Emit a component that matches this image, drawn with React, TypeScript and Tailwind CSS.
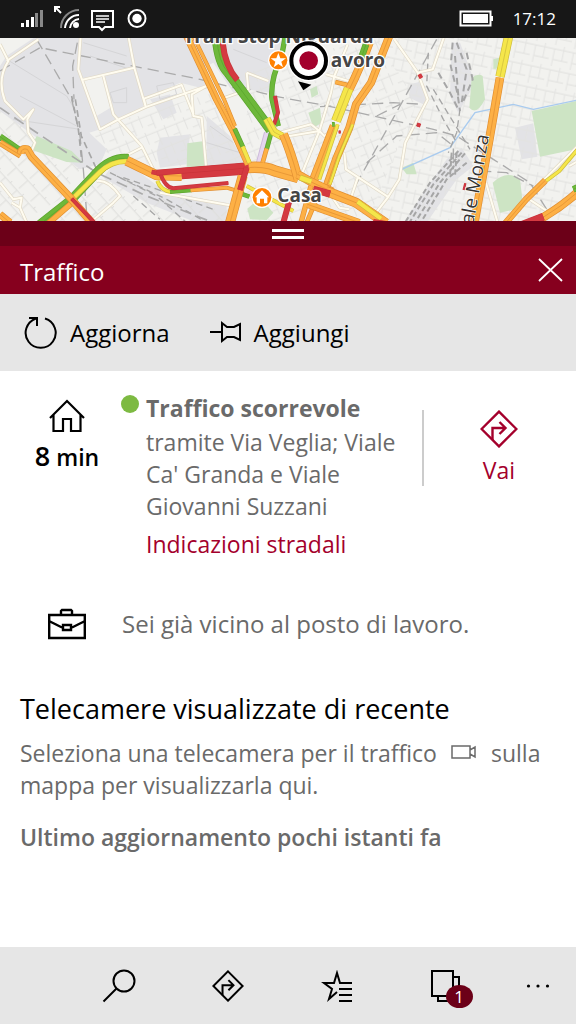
import type { ReactNode } from "react";

const traffic = {
  orange: { fill: "#fdb045", edge: "#e08e32" },
  green: { fill: "#6db83a", edge: "#5aa32c" },
  yellow: { fill: "#f5e64a", edge: "#cdbb3c" },
  red: { fill: "#d43a41", edge: "#c8333a" },
};

type Level = keyof typeof traffic;

// streets are drawn on a 1728 x 549 canvas, three units for one pixel
const leftRoads: [Level, number, string][] = [
  ["orange", 22, "M0 535L30 560"],
  ["green", 28, "M120 565L215 490L290 410Q335 362 385 368"],
  ["orange", 18, "M145 562L220 497"],
  ["yellow", 16, "M218 488L300 408Q335 375 380 376"],
  ["green", 20, "M0 302L62 345"],
  ["orange", 20, "M0 320L62 358"],
  ["orange", 24, "M62 352Q65 335 82 340L95 362L215 490L275 560"],
  ["red", 12, "M215 488L285 562"],
  ["orange", 30, "M380 374L470 418L545 420"],
  ["yellow", 12, "M472 435Q482 464 515 468"],
  ["green", 12, "M510 468L575 463"],
  ["orange", 12, "M572 463L680 455L730 470"],
  ["red", 12, "M480 410Q495 455 520 457L685 441"],
  ["orange", 34, "M740 395Q790 390 825 405L895 425"],
  ["red", 14, "M455 408L480 412"],
  ["red", 34, "M545 413L735 399"],
  ["red", 18, "M470 410L745 388"],
  ["orange", 22, "M560 0L650 190L700 285L745 385"],
  ["orange", 12, "M580 0L672 190L705 270"],
  ["green", 14, "M704 278L730 335"],
  ["yellow", 14, "M728 332L748 380"],
  ["green", 30, "M650 0Q655 80 685 110L770 225L812 282"],
  ["red", 18, "M668 20Q675 90 712 132"],
  ["green", 16, "M856 0L845 60Q810 130 816 190L835 270"],
  ["red", 12, "M825 180L834 230L822 265"],
  ["green", 14, "M815 285L800 340"],
  ["orange", 14, "M800 338L788 380"],
  ["yellow", 24, "M800 248L822 288L848 302"],
  ["orange", 28, "M850 295Q870 340 895 430"],
  ["yellow", 12, "M740 450L880 525"],
  ["green", 14, "M720 472L748 482"],
  ["orange", 30, "M728 420L690 560"],
  ["red", 18, "M740 395L720 462"],
  ["red", 18, "M868 495L850 560"],
];

const rightRoads: [Level, number, string][] = [
  ["orange", 14, "M148 138L188 148"],
  ["orange", 26, "M250 20Q220 100 190 160"],
  ["green", 20, "M240 25L225 68"],
  ["yellow", 30, "M188 158L150 255"],
  ["orange", 28, "M145 270L80 440"],
  ["yellow", 12, "M155 265L100 430"],
  ["orange", 24, "M310 0L255 140L210 205L190 275L150 370L122 450"],
  ["yellow", 10, "M200 265L160 360L132 445"],
  ["green", 14, "M138 265L146 265"],
  ["red", 10, "M158 288L164 288"],
  ["orange", 26, "M35 415L80 440L140 468"],
  ["yellow", 18, "M42 425L76 437"],
  ["orange", 30, "M120 465L210 500L300 562"],
  ["yellow", 16, "M215 497L285 548"],
  ["red", 22, "M82 460L132 474"],
  ["red", 14, "M262 556L300 562"],
  ["orange", 16, "M75 450L45 560"],
  ["orange", 14, "M100 470L62 560"],
  ["orange", 22, "M65 505L220 560"],
  ["orange", 26, "M642 125L610 310L565 560"],
  ["yellow", 28, "M668 0L642 122"],
  ["yellow", 12, "M875 340L820 405L780 435"],
  ["orange", 20, "M778 433L720 490L658 562"],
  ["orange", 26, "M885 460Q830 510 770 545L710 575"],
  ["red", 24, "M700 570L772 542"],
  ["green", 20, "M862 460L885 450"],
  ["red", 12, "M400 115L406 126"],
  ["red", 12, "M400 262L396 272"],
  ["red", 7, "M538 442L533 462"],
];

function Roads({ items }: { items: [Level, number, string][] }) {
  return (
    <g fill="none" strokeLinejoin="round">
      {items.map(([level, width, d]) => (
        <g key={d}>
          <path d={d} stroke={traffic[level].edge} strokeWidth={width} />
          <path d={d} stroke={traffic[level].fill} strokeWidth={width - 4} />
          {width > 19 && level !== "red" && (
            <path d={d} stroke={traffic[level].edge} strokeWidth="3" opacity="0.7" />
          )}
        </g>
      ))}
    </g>
  );
}

function CreamRoads({ d }: { d: string }) {
  return (
    <g fill="none" strokeLinejoin="round">
      <path d={d} stroke="#e0d9c8" strokeWidth="10" />
      <path d={d} stroke="#fffcf0" strokeWidth="6" />
    </g>
  );
}

function TrafficMap() {
  return (
    <svg
      role="img"
      aria-label="Mappa del traffico"
      viewBox="0 6 1728 549"
      preserveAspectRatio="xMidYMid slice"
      className="block h-[183px] w-full font-['Open_Sans',sans-serif]"
    >
      <defs>
        <pattern id="streetsA" width="62" height="54" patternUnits="userSpaceOnUse" patternTransform="rotate(-22)">
          <path d="M0 10H62M20 10V54M0 38H20M46 0V38" fill="none" stroke="#e2e2e0" strokeWidth="3" />
        </pattern>
        <pattern id="streetsB" width="58" height="64" patternUnits="userSpaceOnUse" patternTransform="rotate(12)">
          <path d="M0 12H58M12 12V64M40 0V44M12 44H58" fill="none" stroke="#e3e3e1" strokeWidth="3" />
        </pattern>
        <pattern id="streetsC" width="52" height="44" patternUnits="userSpaceOnUse" patternTransform="rotate(48)">
          <path d="M0 8H52M14 8V44M36 0V8" fill="none" stroke="#dededc" strokeWidth="3" />
        </pattern>
      </defs>

      <rect width="1728" height="560" fill="#f2f2ef" />
      <g fill="#e3e3e6">
        <path d="M20 60L110 0H590L620 160L540 140L430 190L430 215L350 250L310 120L250 130L290 240L340 210L350 250L300 280L268 290L320 340L300 385L240 400L90 290L0 225V90Z" />
        <path d="M540 0H850L810 170L740 160L700 170L640 80L600 100Z" />
        <path d="M620 240L690 300L735 385L620 390Z" />
        <path d="M480 305L570 295L560 385L480 395L470 350Z" />
        <path d="M450 190L510 175L530 230L490 250Z" />
        <path d="M340 385L380 380L500 470L680 500V560H590L440 500L310 425Z" />
        <path d="M1230 145L1258 138L1285 190L1270 205L1228 185Z" />
        <path d="M1545 275L1600 262L1612 362L1565 370Z" />
        <path d="M1210 560L1340 370L1385 335L1420 390L1370 430L1280 560Z" />
        <path d="M1355 20L1380 20L1425 140L1375 230L1350 180Z" />
      </g>
      <path d="M0 225L90 290L240 400L180 490L60 560H0Z" fill="url(#streetsC)" />
      <path d="M270 280L640 170L740 390H470L320 350Z" fill="url(#streetsA)" />
      <path d="M180 490L340 420L700 510V560H120Z" fill="url(#streetsC)" />
      <path d="M740 110L1130 0L1250 200L1100 560H740Z" fill="url(#streetsA)" />
      <path d="M1120 0H1728V560H1100L1250 200Z" fill="url(#streetsB)" />
      <g fill="none" stroke="#d5d5d7" strokeWidth="3">
        <path d="M20 70L200 180L230 230M60 180L230 270M40 250L240 280M250 20L380 60M270 60L390 100M330 170L380 155L380 200L340 200ZM470 150L520 140L530 175L480 190ZM630 270L700 320M620 320L720 350M700 40L800 80" />
      </g>
      <g fill="#cde4c4">
        <path d="M110 300L215 345L250 380L200 378L90 340Z" />
        <path d="M562 322L608 316L615 395L560 392Z" />
        <path d="M742 518L780 485L820 530L800 552L750 550Z" />
        <path d="M925 230L960 215L965 260L940 275Z" />
        <path d="M1415 125Q1435 110 1448 120L1455 190Q1430 240 1408 215Z" />
        <path d="M1595 225L1728 195V340L1620 362Z" />
        <path d="M1478 440Q1520 400 1560 430L1570 515L1500 530Z" />
        <path d="M1205 395L1240 380L1250 415L1220 415Z" />
        <path d="M1480 70L1498 65L1490 98L1480 98ZM930 160L950 150L955 175L935 185Z" />
      </g>
      <path d="M1205 400L1350 335L1425 230L1540 205L1600 220L1728 193" fill="none" stroke="#a9cbef" strokeWidth="4" />

      <g fill="none" stroke="#ababab" strokeWidth="4" strokeDasharray="34 18">
        <path d="M0 105L120 35L600 130L720 160" />
        <path d="M110 10L215 190L240 300L250 400L262 560M232 20L218 90L222 190" />
        <path d="M0 215L80 270L290 410L440 480L640 560" strokeWidth="5" />
        <path d="M720 150Q800 180 960 205L1120 240L1300 280L1370 300L1480 370L1590 440L1640 520" />
        <path d="M1310 10L1200 210L1060 460M960 212L1180 200L1270 205M1130 240L1200 205M1100 380L1190 300L1310 290L1360 330L1360 400" />
        <path d="M1440 405L1520 410L1600 450" />
      </g>
      <g fill="none" stroke="#a6a6a6" strokeWidth="6" strokeDasharray="20 13">
        <path d="M215 180L235 280L246 380M226 190L244 300L290 400" strokeWidth="5" />
        <path d="M330 410L470 480L560 560M350 420L500 490L620 560M370 425L530 480L640 520M400 480L480 550" strokeWidth="4" />
        <path d="M1358 20L1352 90L1372 170L1380 225M1370 20L1400 100L1385 200M1400 50L1418 130L1388 200M1365 60L1375 180M1315 110L1350 170L1375 220" />
        <path d="M1285 50L1280 150L1330 250L1370 320M1380 220L1370 290L1345 350M1300 160L1410 340" strokeWidth="4" />
        <path d="M1375 345L1290 440L1215 560M1385 350L1300 445L1228 560M1395 352L1320 440L1245 560M1400 380L1340 430L1262 560M1355 350L1350 420M1370 350L1365 420" strokeDasharray="16 9" />
      </g>

      <CreamRoads d="M0 25L25 75Q-10 130 15 195L70 250L100 220L82 250L85 290L105 320L95 345M20 75L115 10M242 0L235 100L300 280L352 252L440 212L620 150L575 175L580 240L605 245L618 390M245 132L403 95L385 0M310 120L340 235L425 330L460 400M403 95L437 212L432 188L545 147L580 235M0 440L40 490L65 485L60 515L35 500M60 515L80 560M290 435Q325 430 360 480L340 500L270 560M480 470L690 508M380 358L425 335M740 110L805 135M740 110L745 160L675 185" />
      <g transform="translate(858)">
        <CreamRoads d="M185 25L145 120L135 170L100 285L-20 305M100 285L75 265L-20 290M100 285L115 300L145 280M100 285L45 420M325 10L395 110L425 190L358 320L340 430L305 485L270 530M475 0L440 100L395 110M120 115L188 135M175 350L180 400L305 482M215 425L190 500M130 470L160 515L190 520M600 440L635 560M730 490L790 530M885 320L775 430M850 390L885 370" />
      </g>
      <path d="M800 290L776 380" stroke="#c9b5d8" strokeWidth="16" />
      <path d="M800 290L776 380" stroke="#e5d6ee" strokeWidth="11" />

      <Roads items={leftRoads} />
      <g transform="translate(858)">
        <Roads items={rightRoads} />
      </g>

      <g fill="#454545" stroke="#fff" strokeWidth="8" strokeLinejoin="round" paintOrder="stroke" fontWeight="700" fontSize="57">
        <text x="550" y="21">Tram Stop Niguarda</text>
        <text x="992" y="94">avoro</text>
        <text x="832" y="499">Casa</text>
      </g>
      <text
        transform="translate(1420 566) rotate(-80)"
        fill="#333"
        stroke="#fff"
        strokeWidth="4"
        paintOrder="stroke"
        fontSize="57"
      >
        ale Monza
      </text>

      <circle cx="835" cy="73" r="31" fill="#fff" />
      <circle cx="835" cy="73" r="27" fill="#ff8000" />
      <path d="M835 51L841 67H858L844 77L849 94L835 84L821 94L826 77L812 67H829Z" fill="#fff" />
      <circle cx="786" cy="484" r="32" fill="#fff" />
      <circle cx="786" cy="484" r="28" fill="#ff8000" />
      <path d="M786 463L807 484H802V502H792V488H780V502H770V484H765Z" fill="#fff" />

      <path d="M894 136L934 146L910 163Z" fill="#000" />
      <circle cx="926" cy="74" r="62" fill="#fff" />
      <circle cx="926" cy="74" r="52" fill="#fff" stroke="#000" strokeWidth="12" />
      <circle cx="926" cy="74" r="28" fill="#a3002c" />
    </svg>
  );
}

function StatusBar() {
  return (
    <header className="flex h-[38px] items-center justify-between bg-[#171717] px-5 text-white">
      <div className="flex items-center">
        <svg viewBox="0 0 24 20" className="h-5 w-6" fill="#fff">
          <path d="M1 14h3v4H1zM6 11h3v7H6zM11 8h3v10h-3z" />
          <path d="M15 4h3v14h-3zM20 1h3v17h-3z" fill="#888" />
        </svg>
        <svg viewBox="0 0 28 28" className="ml-2 h-7 w-7" fill="none" stroke="#fff" strokeWidth="2">
          <path d="M3 7V2h5M3 2l6 6" />
          <path d="M9 23A18 18 0 0 1 27 5" stroke="#888" />
          <path d="M13 23a14 14 0 0 1 14-13M18 23a10 10 0 0 1 9-9" />
          <circle cx="24" cy="20" r="3" fill="#fff" stroke="none" />
        </svg>
        <svg viewBox="0 0 24 22" className="mt-1 ml-[10px] h-[22px] w-6" fill="none" stroke="#fff" strokeWidth="2">
          <path d="M2 1h21v16h-8l-3 3-3-3H2z" />
          <path d="M6 6h13M6 9h13M6 12h9" strokeWidth="1.5" />
        </svg>
        <svg viewBox="0 0 22 22" className="ml-3 h-[22px] w-[22px]" fill="none">
          <circle cx="11" cy="10.5" r="8.5" stroke="#fff" strokeWidth="2" />
          <circle cx="11" cy="10.5" r="4.7" fill="#fff" />
        </svg>
      </div>
      <div className="flex items-center gap-5">
        <svg viewBox="0 0 34 18" className="h-[18px] w-[34px]" fill="#fff">
          <path d="M1.5 1.5h30v14h-30z" fill="none" stroke="#fff" strokeWidth="2" />
          <path d="M4 4h25v9H4zM32 6h2v5h-2z" />
        </svg>
        <span className="text-[17px] leading-6">17:12</span>
      </div>
    </header>
  );
}

function DirectionsIcon({ className }: { className: string }) {
  return (
    <svg viewBox="0 0 38 38" className={className} fill="none" stroke="currentColor" strokeWidth="2.4">
      <path d="M19 1.6L36.400 19 19 36.400 1.600 19z" />
      <path d="M12.500 30V18h13M19.500 12l6 6-6 6" />
    </svg>
  );
}

function NavButton({ label, children }: { label: string; children: ReactNode }) {
  return (
    <button type="button" aria-label={label} className="flex h-full w-[109px] items-center justify-center">
      {children}
    </button>
  );
}

export default function App() {
  return (
    <div className="flex min-h-screen flex-col bg-white font-['Open_Sans',sans-serif] text-black">
      <StatusBar />
      <TrafficMap />

      <button type="button" aria-label="Ridimensiona pannello" className="flex h-[25px] flex-col items-center justify-center gap-1 bg-[#6c0018]">
        <span className="h-[3px] w-8 bg-white" />
        <span className="h-[3px] w-8 bg-white" />
      </button>
      <div className="flex h-12 items-center justify-between bg-[#86001e] pr-3 pl-5 text-white">
        <h1 className="pt-1 text-[24px] leading-8">Traffico</h1>
        <button type="button" aria-label="Chiudi">
          <svg viewBox="0 0 28 28" className="h-7 w-7" stroke="#fff" strokeWidth="1.8">
            <path d="M3 3l23 22M26 3L3 25" />
          </svg>
        </button>
      </div>
      <div className="flex h-[77px] items-center gap-10 bg-[#e6e6e6] px-6 text-[24px] leading-8">
        <button type="button" className="flex items-center gap-3">
          <svg viewBox="0 0 34 34" className="h-[34px] w-[34px]" fill="none" stroke="currentColor" strokeWidth="2">
            <path d="M21 2.500A15 15 0 1 1 12 2.600M5 2h8v8" />
          </svg>
          Aggiorna
        </button>
        <button type="button" className="flex items-center gap-3">
          <svg viewBox="0 0 32 34" className="h-[34px] w-8" fill="none" stroke="currentColor" strokeWidth="2">
            <path d="M0 16h12M12 7v18l5-4h7l6 3V8l-6 3h-7z" />
          </svg>
          Aggiungi
        </button>
      </div>

      <main className="flex-1 px-5 pt-[21px] text-[23px] leading-8 text-[#6a6a6a]">
        <section className="flex items-start">
          <div className="flex w-[94px] shrink-0 flex-col items-center pt-[7px] text-black">
            <svg viewBox="0 0 36 34" className="h-[34px] w-9" fill="none" stroke="currentColor" strokeWidth="2.2">
              <path d="M1 19L18 2l17 17M4.500 16v16H14V20h8v12h9.500V16" />
            </svg>
            <p className="mt-[7px] text-[23px] font-semibold">
              <span className="text-[27px]">8</span> min
            </p>
          </div>
          <span className="mt-[3px] ml-[7px] h-[18px] w-[18px] shrink-0 rounded-full bg-[#7dba42]" />
          <div className="ml-[7px] min-w-0 flex-1">
            <h2 className="font-bold">Traffico scorrevole</h2>
            <p className="mt-[2px]">tramite Via Veglia; Viale Ca' Granda e Viale Giovanni Suzzani</p>
            <a href="#" className="mt-[6px] block text-[#a4002c]">Indicazioni stradali</a>
          </div>
          <div className="mt-[18px] h-[76px] w-[2px] shrink-0 bg-[#cccccc]" />
          <button type="button" className="ml-[18px] flex w-[114px] shrink-0 flex-col items-center pt-[18px] text-[#a4002c]">
            <DirectionsIcon className="h-[38px] w-[38px]" />
            <span className="mt-[6px]">Vai</span>
          </button>
        </section>

        <section className="mt-12 flex items-center">
          <div className="flex w-[94px] shrink-0 justify-center text-black">
            <svg viewBox="0 0 38 32" className="h-8 w-[38px]" fill="none" stroke="currentColor" strokeWidth="2.400">
              <path d="M1.200 7h35.600v23H1.200zM13 7V3l1-1h9l1 1v4M1 13l13 6.500M37 13l-13 6.500M15 17h8v5h-8z" />
            </svg>
          </div>
          <p className="ml-2 text-[24px]">Sei già vicino al posto di lavoro.</p>
        </section>

        <section>
          <h2 className="mt-[49px] text-[27px] leading-10 text-black">Telecamere visualizzate di recente</h2>
          <p className="mt-2">
            Seleziona una telecamera per il traffico
            <svg viewBox="0 0 26 16" className="mx-[14px] mb-2 inline h-4 w-[26px]" fill="none" stroke="currentColor" strokeWidth="1.5">
              <path d="M1 2h18v12H1zM19 6l5-3v10l-5-3" />
            </svg>
            sulla mappa per visualizzarla qui.
          </p>
          <p className="mt-5 font-semibold">Ultimo aggiornamento pochi istanti fa</p>
        </section>
      </main>

      <nav className="flex h-[77px] items-center justify-end bg-[#e6e6e6]">
        <NavButton label="Cerca">
          <svg viewBox="0 0 34 34" className="h-[34px] w-[34px]" fill="none" stroke="currentColor" strokeWidth="2">
            <circle cx="22" cy="12" r="10.5" />
            <path d="M14.500 19.500L1.500 32.500" />
          </svg>
        </NavButton>
        <NavButton label="Indicazioni">
          <DirectionsIcon className="h-8 w-8" />
        </NavButton>
        <NavButton label="Preferiti">
          <svg viewBox="0 0 32 32" className="h-8 w-8" fill="none" stroke="currentColor" strokeWidth="2">
            <path d="M31 13H19L16 3l-3 10H3l8 6-3 10 8-7" />
            <path d="M18 19h13M18 25h13M18 31h13" />
          </svg>
        </NavButton>
        <NavButton label="Mappe">
          <span className="relative">
            <svg viewBox="0 0 30 34" className="h-[34px] w-[30px]" fill="none" stroke="currentColor" strokeWidth="2">
              <path d="M1 2h21v25H1zM22 8h6v24H7v-5" />
            </svg>
            <span className="absolute top-4 left-[15px] h-[23px] w-[27px] rounded-[50%] bg-[#6c0018] text-center text-[17px] leading-[23px] text-white">1</span>
          </span>
        </NavButton>
        <button type="button" aria-label="Altro" className="flex h-full w-[76px] items-center justify-center">
          <svg viewBox="0 0 24 4" className="h-1 w-6" fill="currentColor">
            <circle cx="2.5" cy="2" r="1.6" />
            <circle cx="12" cy="2" r="1.6" />
            <circle cx="21.5" cy="2" r="1.6" />
          </svg>
        </button>
      </nav>
    </div>
  );
}
